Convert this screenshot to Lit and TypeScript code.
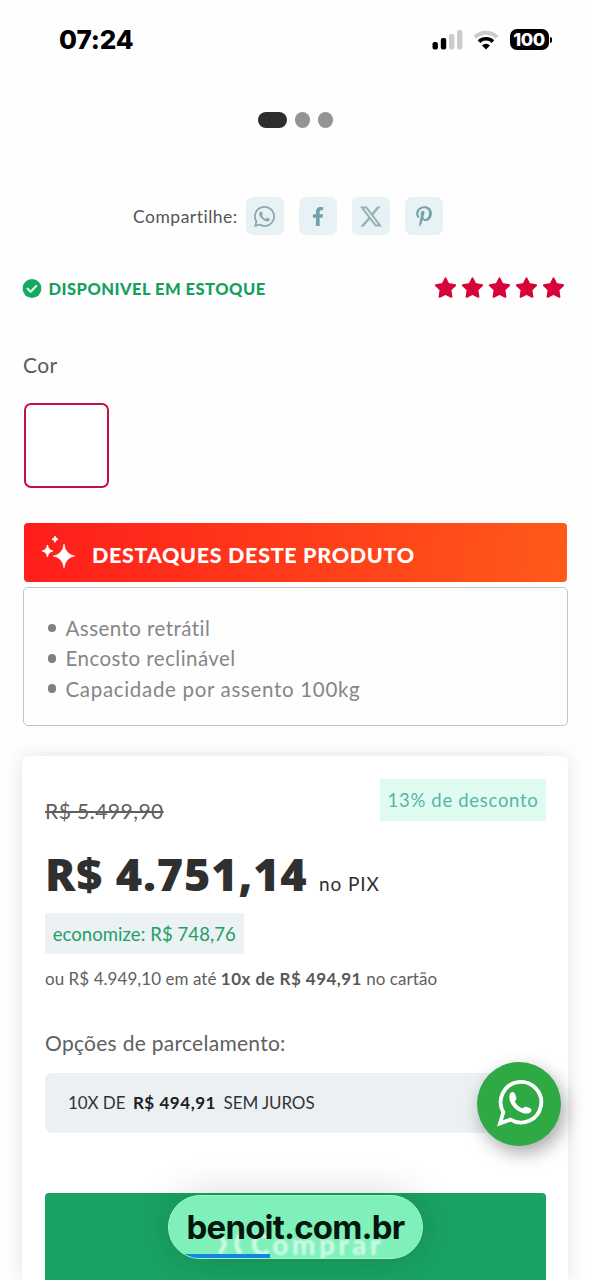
import { LitElement, html, css, svg } from "lit";
import { customElement } from "lit/decorators.js";

const WHATSAPP =
  "M380.9 97.1C339 55.1 283.2 32 223.9 32c-122.4 0-222 99.6-222 222 0 39.1 10.2 77.3 29.6 111L0 480l117.7-30.9c32.4 17.7 68.9 27 106.1 27h.1c122.3 0 224.1-99.6 224.1-222 0-59.3-25.2-115-67.1-157zm-157 341.6c-33.2 0-65.7-8.9-94-25.7l-6.7-4-69.8 18.3L72 359.2l-4.4-7c-18.5-29.4-28.2-63.3-28.2-98.2 0-101.7 82.8-184.5 184.6-184.5 49.3 0 95.6 19.2 130.4 54.1 34.8 34.9 56.2 81.2 56.1 130.5 0 101.8-84.9 184.6-186.6 184.6zm101.2-138.2c-5.5-2.8-32.8-16.2-37.9-18-5.1-1.9-8.8-2.8-12.5 2.8-3.7 5.6-14.3 18-17.6 21.8-3.2 3.7-6.5 4.2-12 1.4-32.6-16.3-54-29.1-75.5-66-5.7-9.8 5.7-9.1 16.3-30.3 1.8-3.7.9-6.9-.5-9.7-1.4-2.8-12.5-30.1-17.1-41.2-4.5-10.8-9.1-9.3-12.5-9.5-3.2-.2-6.9-.2-10.6-.2-3.7 0-9.7 1.4-14.8 6.9-5.1 5.6-19.4 19-19.4 46.3 0 27.3 19.9 53.7 22.6 57.4 2.8 3.7 39.1 59.7 94.8 83.8 35.2 15.2 49 16.5 66.6 13.9 10.7-1.6 32.8-13.4 37.4-26.4 4.6-13 4.6-24.1 3.2-26.4-1.3-2.5-5-3.9-10.5-6.6z";
const FACEBOOK =
  "M279.14 288l14.22-92.66h-88.91v-60.13c0-25.35 12.42-50.06 52.24-50.06h40.42V6.26S260.43 0 225.36 0c-73.22 0-121.08 44.38-121.08 124.72v70.62H22.89V288h81.39v224h100.17V288z";
const X_LOGO =
  "M18.901 1.153h3.68l-8.04 9.19L24 22.846h-7.406l-5.8-7.584-6.638 7.584H.474l8.6-9.83L0 1.154h7.594l5.243 6.932ZM17.61 20.644h2.039L6.486 3.24H4.298Z";
const PINTEREST =
  "M204 6.5C101.4 6.5 0 74.9 0 185.6 0 256 39.6 296 63.6 296c9.9 0 15.6-27.6 15.6-35.4 0-9.3-23.7-29.1-23.7-67.8 0-80.4 61.2-137.4 140.4-137.4 68.1 0 118.5 38.7 118.5 109.8 0 53.1-21.3 152.7-90.3 152.7-24.9 0-46.2-18-46.2-43.8 0-37.8 26.4-74.4 26.4-113.4 0-66.2-93.9-54.2-93.9 25.8 0 16.8 2.1 35.4 9.6 50.7-13.8 59.4-42 147.9-42 209.1 0 18.9 2.7 37.5 4.5 56.4 3.4 3.8 1.7 3.4 6.9 1.5 50.4-69 48.6-82.5 71.4-172.8 12.3 23.4 44.1 36 69.3 36 106.2 0 153.9-103.5 153.9-196.8C384 71.3 298.2 6.5 204 6.5z";

const share = [
  { d: WHATSAPP, box: "0 32 448 448", w: 21, h: 21, color: "#86aab0" },
  { d: FACEBOOK, box: "0 0 320 512", w: 12, h: 19, color: "#6fa3a9" },
  { d: X_LOGO, box: "0 1 24 22", w: 22, h: 21, color: "#94b3b8" },
  { d: PINTEREST, box: "0 0 384 512", w: 18, h: 21, color: "#74a3aa" },
];

const features = ["Assento retrátil", "Encosto reclinável", "Capacidade por assento 100kg"];

@customElement("status-bar")
class StatusBar extends LitElement {
  static styles = css`
    :host {
      display: flex;
      justify-content: space-between;
      align-items: center;
      height: 79px;
      padding: 0 39px 0 59px;
      font-family: Inter, "Liberation Sans", sans-serif;
      color: #000;
    }
    .time { font-size: 26px; font-weight: 800; letter-spacing: -0.1px; }
    .icons { display: flex; align-items: center; }
    .signal { width: 31px; height: 20px; margin-right: 10px; }
    .wifi { width: 26px; height: 20px; margin-right: 11px; }
    .battery {
      width: 39px;
      height: 21.5px;
      border-radius: 7px;
      background: #000;
      color: #fff;
      font-size: 18px;
      font-weight: 800;
      line-height: 22px;
      text-align: center;
      letter-spacing: -0.4px;
    }
    .tip { width: 2.5px; height: 6px; margin-left: 1px; border-radius: 0 3px 3px 0; background: #000; }
  `;
  render() {
    return html`
      <span class="time">07:24</span>
      <div class="icons">
        <svg class="signal" viewBox="0 0 31 20">
          <rect x="0.5" y="12" width="5.4" height="7.5" rx="2" />
          <rect x="8.8" y="8" width="5.4" height="11.5" rx="2" />
          <rect x="17" y="4" width="5.4" height="15.5" rx="2" fill="#ccc" />
          <rect x="25" y="0" width="5.4" height="19.5" rx="2" fill="#ccc" />
        </svg>
        <svg class="wifi" viewBox="0 0 26 20" fill="none">
          <path d="M2 7.2a16 16 0 0 1 22 0" stroke="#ccc" stroke-width="4" />
          <path d="M6 11.6a10.2 10.2 0 0 1 14 0" stroke="#000" stroke-width="3.6" />
          <path d="M13 19.6L9 15.4a5.8 5.8 0 0 1 8 0z" fill="#000" />
        </svg>
        <div class="battery">100</div>
        <div class="tip"></div>
      </div>
    `;
  }
}

@customElement("share-row")
class ShareRow extends LitElement {
  static styles = css`
    :host {
      display: flex;
      align-items: center;
      margin: 70px 0 0 133px;
      height: 38px;
    }
    .label { width: 113px; font-size: 17.5px; letter-spacing: 0.5px; color: #555; white-space: nowrap; }
    .tiles { display: flex; gap: 15px; }
    .tile {
      display: flex;
      align-items: center;
      justify-content: center;
      box-sizing: border-box;
      width: 38px;
      height: 38px;
      padding-right: 1px;
      border-radius: 7px;
      background: #e8f1f3;
    }
  `;
  render() {
    return html`
      <span class="label">Compartilhe:</span>
      <div class="tiles">
        ${share.map(
          (s) => html`<div class="tile">
            <svg width=${s.w} height=${s.h} viewBox=${s.box} fill=${s.color}>${svg`<path d=${s.d} />`}</svg>
          </div>`
        )}
      </div>
    `;
  }
}

@customElement("price-card")
class PriceCard extends LitElement {
  static styles = css`
    :host {
      display: flex;
      flex-direction: column;
      flex: 1;
      margin: 30px 23px 0 22px;
      padding: 23px 22px 0 23px;
      border-radius: 6px 6px 0 0;
      background: #fff;
      box-shadow: 0 0 18px rgba(0, 0, 0, 0.11);
      color: #606060;
      white-space: nowrap;
    }
    .top { display: flex; justify-content: space-between; align-items: flex-start; height: 44px; }
    .old { margin-top: 20px; font-size: 21px; line-height: 24px; text-decoration: line-through; letter-spacing: 0.47px; }
    .badge {
      width: 166px;
      height: 42px;
      line-height: 43px;
      background: #e0fcf1;
      color: #58b3a9;
      font-size: 18.5px;
      text-align: center;
      letter-spacing: 0.7px;
    }
    .now { display: flex; align-items: baseline; margin-top: 23px; height: 54px; color: #2f2f2f; }
    .amount { width: 274px; font-family: "Open Sans", sans-serif; font-size: 45px; font-weight: 800; line-height: 55px; letter-spacing: 0.85px; }
    .pix { font-size: 19px; letter-spacing: 0.9px; }
    .save {
      width: 198.5px;
      height: 41px;
      margin-top: 13px;
      line-height: 42px;
      background: #ecf1f4;
      color: #20a067;
      font-size: 18.5px;
      text-align: center;
      letter-spacing: 0.08px;
    }
    .card-pay { margin-top: 12px; font-size: 17px; line-height: 25px; height: 24px; letter-spacing: 0.05px; }
    .card-pay b { font-weight: 700; color: #585858; letter-spacing: 0.45px; }
    .title { margin-top: 40px; font-size: 21px; line-height: 26px; letter-spacing: 0.28px; }
    .select {
      display: flex;
      align-items: center;
      gap: 7.5px;
      height: 59.5px;
      margin-top: 17px;
      padding-left: 23px;
      border-radius: 7px;
      background: #ecf0f3;
      color: #303436;
      font-size: 17px;
      letter-spacing: -0.08px;
    }
    .select b { color: #1c2022; letter-spacing: 0.55px; }
    .buy {
      flex: 1;
      margin-top: 60.5px;
      border-radius: 4px 4px 0 0;
      background: #1aa362;
    }
  `;
  render() {
    return html`
      <div class="top">
        <span class="old">R$ 5.499,90</span>
        <span class="badge">13% de desconto</span>
      </div>
      <div class="now"><span class="amount">R$ 4.751,14</span><span class="pix">no PIX</span></div>
      <div class="save">economize: R$ 748,76</div>
      <div class="card-pay">ou R$ 4.949,10 em até <b>10x de R$ 494,91</b> no cartão</div>
      <div class="title">Opções de parcelamento:</div>
      <div class="select"><span>10X DE</span><b>R$ 494,91</b><span>SEM JUROS</span></div>
      <div class="buy"></div>
    `;
  }
}

@customElement("app-root")
class AppRoot extends LitElement {
  static styles = css`
    :host {
      position: relative;
      display: flex;
      flex-direction: column;
      width: 591px;
      height: 1280px;
      overflow: hidden;
      background: #fefefe;
      font-family: Lato, "Open Sans", sans-serif;
    }
    .dots { display: flex; justify-content: center; gap: 7.5px; margin-top: 33px; height: 15px; }
    .dot { width: 15.5px; height: 15.5px; border-radius: 8px; background: #949494; }
    .dot.on { width: 29px; background: #2d2d2d; }
    .meta { display: flex; justify-content: space-between; align-items: center; height: 22px; margin: 42px 26px 0 21.5px; }
    .stock { display: flex; align-items: center; gap: 7px; color: #16a05f; font-size: 16.5px; font-weight: 900; letter-spacing: 0.48px; }
    .stock-label { margin-top: 1px; }
    .stars { display: flex; gap: 4px; }
    .color { margin: 53px 0 0 23px; font-size: 21px; line-height: 26px; letter-spacing: 0.4px; color: #5a5a5a; }
    .swatch { box-sizing: border-box; width: 85px; height: 85px; margin: 25px 0 0 24px; border: 2px solid #c4123f; border-radius: 7px; background: #fff; }
    .banner {
      display: flex;
      align-items: center;
      height: 59px;
      margin: 35px 24px 0;
      border-radius: 4px;
      background: linear-gradient(100deg, #ff1d1b, #ff5a19);
      color: #fff;
      font-size: 21.5px;
      font-weight: 900;
      letter-spacing: 0.67px;
    }
    .banner-label { margin-top: 4px; }
    .spark { margin: 0 16px 0 16px; }
    .features {
      box-sizing: border-box;
      height: 139px;
      margin: 5px 23px 0 22.5px;
      padding: 25px 0 0 24px;
      border: 1.5px solid #c4c4c4;
      border-radius: 5px;
      color: #868686;
      font-size: 20.5px;
      line-height: 30.3px;
      letter-spacing: 0.45px;
    }
    .feature { display: flex; align-items: center; gap: 9.5px; }
    .feature:last-child { letter-spacing: 0.68px; }
    .feature::before { content: ""; width: 8.5px; height: 8.5px; border-radius: 50%; background: #808080; }
    .chat {
      position: absolute;
      left: 477px;
      top: 1062px;
      width: 84px;
      height: 84px;
      border-radius: 50%;
      background: #2fa944;
      box-shadow: 4px 7px 18px rgba(0, 0, 0, 0.34);
    }
    .address {
      position: absolute;
      left: 168px;
      top: 1195px;
      box-sizing: border-box;
      width: 255px;
      height: 64px;
      border-radius: 32px;
      border: 1.5px solid #9df5cb;
      overflow: hidden;
      background: #80f0bb;
      color: #03170c;
      font: 700 33px/62px Inter, "Liberation Sans", sans-serif;
      text-align: center;
      letter-spacing: -0.8px;
    }
    .halo {
      position: absolute;
      left: 168px;
      top: 1195px;
      width: 255px;
      height: 64px;
      border-radius: 32px;
      box-shadow: 0 0 40px rgba(0, 0, 0, 0.16);
    }
    .host { position: relative; }
    .ghost {
      position: absolute;
      left: 48px;
      top: 34px;
      display: flex;
      align-items: center;
      gap: 8px;
      color: rgba(235, 255, 245, 0.75);
      font: 900 28px/28px Lato, sans-serif;
      letter-spacing: 3.4px;
      filter: blur(1px);
    }
    .progress { position: absolute; left: 0; bottom: 0; width: 101px; height: 4px; background: #1287e0; }
  `;
  render() {
    return html`
      <status-bar></status-bar>
      <div class="dots"><i class="dot on"></i><i class="dot"></i><i class="dot"></i></div>
      <share-row></share-row>
      <div class="meta">
        <div class="stock">
          <svg width="20" height="20" viewBox="0 0 20 20">
            <circle cx="10" cy="10.5" r="9.4" fill="#16a85f" />
            <path d="M5.6 10.8l3 3 5.6-5.8" fill="none" stroke="#c9ffe0" stroke-width="2.3" stroke-linecap="round" stroke-linejoin="round" />
          </svg>
          <span class="stock-label">DISPONIVEL EM ESTOQUE</span>
        </div>
        <div class="stars">
          ${[0, 1, 2, 3, 4].map(
            () => html`<svg width="23" height="22" viewBox="0 0 23 22">
              <path d="M11.5 1.400l2.900 5.700 6.700 1.100-4.700 4.700 1 6.900-5.900-3-5.900 3 1-6.900-4.700-4.700 6.700-1.100z" fill="#d60439" stroke="#d60439" stroke-width="2" stroke-linejoin="round" />
            </svg>`
          )}
        </div>
      </div>
      <div class="color">Cor</div>
      <div class="swatch"></div>
      <div class="banner">
        <svg class="spark" width="36" height="34" viewBox="0 0 36 34" fill="#fff">
          <path d="M24 8Q25.500 18.500 35 20Q25.500 21.500 24 32Q22.500 21.500 13 20Q22.500 18.500 24 8z" stroke="#fff" stroke-width="0.8" stroke-opacity="0.6" />
          <path d="M7.500 9Q8.300 14.200 13 15Q8.300 15.800 7.500 21Q6.700 15.800 2 15Q6.700 14.200 7.500 9z" stroke="#fff" stroke-width="0.8" />
          <path d="M15 0Q15.500 2.500 18 3.200Q15.500 3.900 15 6.400Q14.500 3.900 12 3.200Q14.500 2.500 15 0z" stroke="#fff" stroke-width="0.8" />
        </svg>
        <span class="banner-label">DESTAQUES DESTE PRODUTO</span>
      </div>
      <div class="features">${features.map((f) => html`<div class="feature">${f}</div>`)}</div>
      <price-card></price-card>
      <div class="chat">
        <svg width="84" height="84" viewBox="0 0 84 84" fill="none">
          <path d="M26.300 50.200A20.300 20.300 0 1 1 33.500 57.600L23 61.400z" stroke="#fff" stroke-width="3.800" stroke-linejoin="miter" />
          <path d="M32.800 32.200c.8-2.800 4-3 5-.6l1.500 4c.5 1.600-.4 2.700-1.500 3.900 1.500 3.100 4.200 5.700 7.700 7.100 1.200-1.300 2.300-2.400 3.900-1.800l3.700 1.500c2 .9 1.700 3.400-.2 4.400-3.200 1.700-7.300.8-10.700-1.200-4-2.300-7-5.400-8.800-9.300-1-2.500-1.400-5.500-.6-8z" fill="#fff" />
        </svg>
      </div>
      <div class="halo"></div>
      <div class="address">
        <span class="ghost">
          <svg width="26" height="26" viewBox="0 0 26 26" fill="none" stroke="currentColor" stroke-width="4">
            <path d="M3 3l5 10-5 10M24 3q-9 10 0 20" />
          </svg>
          <span>Comprar</span>
        </span>
        <span class="host">benoit.com.br</span>
        <i class="progress"></i>
      </div>
    `;
  }
}
